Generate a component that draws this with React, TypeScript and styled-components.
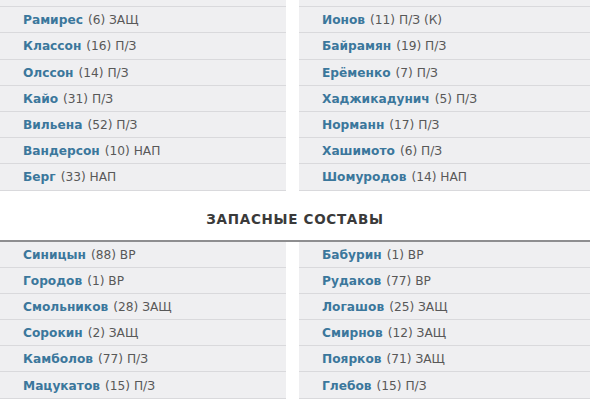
import React from 'react';
import styled, { createGlobalStyle } from 'styled-components';

const GlobalStyle = createGlobalStyle`
  html, body {
    margin: 0;
    padding: 0;
    background: #ffffff;
  }
  body {
    font-family: "DejaVu Sans", "Open Sans", sans-serif;
    overflow: hidden;
  }
`;

const Page = styled.div`
  width: 590px;
  margin-top: -19px;
`;

const Columns = styled.div`
  display: grid;
  grid-template-columns: 286px 291px;
  column-gap: 13px;
`;

const Column = styled.div`
  display: flex;
  flex-direction: column;
`;

const Row = styled.div`
  box-sizing: border-box;
  height: 26.2px;
  display: flex;
  align-items: center;
  padding-left: 23px;
  padding-top: 1px;
  background: #efeff1;
  border-bottom: 1px solid #d9d9dc;
  font-size: 12.2px;
  color: #585858;
  white-space: nowrap;
`;

const Name = styled.span`
  font-weight: 700;
  color: #3b779c;
  margin-right: 5px;
`;

const SectionTitle = styled.div`
  height: 51px;
  box-sizing: border-box;
  display: flex;
  align-items: center;
  justify-content: center;
  padding-top: 7px;
  border-bottom: 2px solid #8e8e90;
  font-size: 13.5px;
  font-weight: 700;
  letter-spacing: 0.7px;
  color: #3a3a3a;
`;

type Player = [string, string];

const mainLeft: Player[] = [
  ['Жеке', '(8) ЗАЩ'],
  ['Рамирес', '(6) ЗАЩ'],
  ['Классон', '(16) П/З'],
  ['Олссон', '(14) П/З'],
  ['Кайо', '(31) П/З'],
  ['Вильена', '(52) П/З'],
  ['Вандерсон', '(10) НАП'],
  ['Берг', '(33) НАП'],
];

const mainRight: Player[] = [
  ['Зотов', '(3) ЗАЩ'],
  ['Ионов', '(11) П/З (К)'],
  ['Байрамян', '(19) П/З'],
  ['Ерёменко', '(7) П/З'],
  ['Хаджикадунич', '(5) П/З'],
  ['Норманн', '(17) П/З'],
  ['Хашимото', '(6) П/З'],
  ['Шомуродов', '(14) НАП'],
];

const subsLeft: Player[] = [
  ['Синицын', '(88) ВР'],
  ['Городов', '(1) ВР'],
  ['Смольников', '(28) ЗАЩ'],
  ['Сорокин', '(2) ЗАЩ'],
  ['Камболов', '(77) П/З'],
  ['Мацукатов', '(15) П/З'],
];

const subsRight: Player[] = [
  ['Бабурин', '(1) ВР'],
  ['Рудаков', '(77) ВР'],
  ['Логашов', '(25) ЗАЩ'],
  ['Смирнов', '(12) ЗАЩ'],
  ['Поярков', '(71) ЗАЩ'],
  ['Глебов', '(15) П/З'],
];

const PlayerList: React.FC<{ players: Player[] }> = ({ players }) => (
  <Column>
    {players.map(([name, info]) => (
      <Row key={name}>
        <Name>{name}</Name>
        {info}
      </Row>
    ))}
  </Column>
);

const App: React.FC = () => (
  <>
    <GlobalStyle />
    <Page>
      <Columns>
        <PlayerList players={mainLeft} />
        <PlayerList players={mainRight} />
      </Columns>
      <SectionTitle>ЗАПАСНЫЕ СОСТАВЫ</SectionTitle>
      <Columns>
        <PlayerList players={subsLeft} />
        <PlayerList players={subsRight} />
      </Columns>
    </Page>
  </>
);

export default App;
